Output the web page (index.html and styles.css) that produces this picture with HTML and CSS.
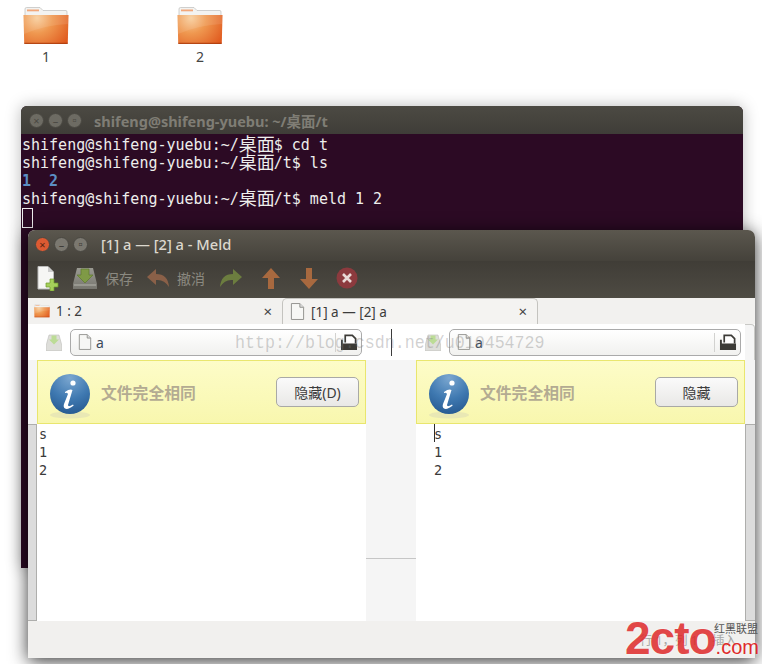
FILE: index.html
```html
<!DOCTYPE html>
<html lang="zh">
<head>
<meta charset="utf-8">
<title>Meld</title>
<link rel="stylesheet" href="styles.css">
</head>
<body>
<svg class="defs" width="0" height="0">
  <defs>
    <radialGradient id="fold" gradientUnits="userSpaceOnUse" cx="14" cy="11" r="44">
      <stop offset="0" stop-color="#f7cd9b"/><stop offset="0.35" stop-color="#ef9850"/><stop offset="1" stop-color="#dc4810"/>
    </radialGradient>
    <linearGradient id="drive" x1="0" y1="0" x2="0" y2="1">
      <stop offset="0" stop-color="#9a9a92"/><stop offset="1" stop-color="#77766f"/>
    </linearGradient>
    <radialGradient id="ball" cx="0.5" cy="0.1" r="0.95">
      <stop offset="0" stop-color="#7ba7d0"/><stop offset="0.55" stop-color="#3f79b1"/><stop offset="1" stop-color="#25588f"/>
    </radialGradient>
    <symbol id="folder" viewBox="0 0 46 38">
      <path d="M2 2 Q2 .5 3.500 .5 H17 L20 3.500 H43 Q44 3.500 44 5 V10 H2 Z" fill="#f3f3f1" stroke="#bdbdbb" stroke-width=".7"/>
      <rect x="4" y="2.500" width="12" height="1.800" fill="#f2a77a"/>
      <path d="M0.500 8 H45.500 L44.800 35.500 Q44.700 37 43 37 H3 Q1.300 37 1.200 35.500 Z" fill="url(#fold)"/>
      <path d="M1 27 Q22 18 45 17 L45 8 H1 Z" fill="#fff" opacity=".1"/>
      <path d="M1.200 36.300 H44.800" stroke="#a93a0c" stroke-width="1"/>
    </symbol>
    <symbol id="doc" viewBox="0 0 16 18">
      <path d="M1.500 .5 H10.500 L14.500 4.500 V17.500 H1.500 Z" fill="#f7f7f5" stroke="#8f8f8c"/>
      <path d="M10.500 .5 V4.500 H14.500" fill="#ddd" stroke="#8f8f8c"/>
    </symbol>
    <symbol id="open" viewBox="0 0 19 18">
      <path d="M5.500 9 V1.500 H13 L16.500 5 V10" fill="#fff" stroke="#3c3b37" stroke-width="1.800"/>
      <path d="M1 6 H3 V10 H18 V17 H1 Z" fill="#3c3b37"/>
    </symbol>
    <symbol id="save" viewBox="0 0 24 24">
      <path d="M4 2 H20 L24 18 V23 H0 V18 Z" fill="url(#drive)"/>
      <path d="M8 3 H16 V9 H20 L12 17 L4 9 H8 Z" fill="#7f9a46" stroke="#5f7a2e" stroke-width=".7"/>
      <rect x="1" y="18.500" width="22" height="1" fill="#b4b4ac"/>
    </symbol>
    <symbol id="save-dim" viewBox="0 0 16 17">
      <path d="M3 1 H13 L16 12 V16.500 H0 V12 Z" fill="#dededa" stroke="#bdbdb8" stroke-width=".6"/>
      <path d="M5.500 1.500 H10.500 V5.500 H13 L8 10.500 L3 5.500 H5.500 Z" fill="#bcdc96"/>
    </symbol>
    <symbol id="info" viewBox="0 0 44 48">
      <ellipse cx="22" cy="42" rx="20" ry="3.500" fill="#e9e8b4"/>
      <circle cx="22" cy="21" r="20" fill="url(#ball)"/>
      <circle cx="25" cy="10" r="2.600" fill="#fff"/>
      <path d="M17 19 Q22 15.500 24.500 17 L20 32 Q20 34.500 25 31.500 L25.700 32.500 Q20 37 17 35.500 Q15 34 16 31 L20 21 Q19 19 17 20 Z" fill="#fff"/>
    </symbol>
  </defs>
</svg>

<div class="icon icon-one">
  <svg class="folder-icon"><use href="#folder"/></svg>
  <span>1</span>
</div>
<div class="icon icon-two">
  <svg class="folder-icon"><use href="#folder"/></svg>
  <span>2</span>
</div>

<section class="terminal">
  <header class="term-bar">
    <div class="lights">
      <span class="light dim">×</span><span class="light dim">–</span><span class="light dim">▫</span>
    </div>
    <span class="term-title">shifeng@shifeng-yuebu: ~/桌面/t</span>
  </header>
  <div class="term-body">
    <div class="term-line">shifeng@shifeng-yuebu:~/<i>桌面</i>$ cd t</div>
    <div class="term-line">shifeng@shifeng-yuebu:~/<i>桌面</i>/t$ ls</div>
    <div class="term-line"><b>1</b>  <b>2</b></div>
    <div class="term-line">shifeng@shifeng-yuebu:~/<i>桌面</i>/t$ meld 1 2</div>
    <div class="term-line"><u class="term-cursor"></u></div>
  </div>
</section>

<section class="meld">
  <header class="meld-head">
    <div class="meld-bar">
      <div class="lights lights-meld">
        <span class="light close">×</span><span class="light">–</span><span class="light">▫</span>
      </div>
      <span class="meld-title">[1] a — [2] a - Meld</span>
    </div>
    <div class="toolbar">
      <svg class="t-new" width="22" height="25" viewBox="0 0 22 25">
        <path d="M1 .5 H11 L16.500 6 V23 H1 Z" fill="#f6f6f4" stroke="#bbb"/>
        <path d="M11 .5 V6 H16.500" fill="#ccc"/>
        <path d="M13 13 H17 V17 H21 V21 H17 V25 H13 V21 H9 V17 H13 Z" fill="#a5cf5a" stroke="#6f9a2c" stroke-width=".7"/>
      </svg>
      <svg class="t-save" width="24" height="24"><use href="#save"/></svg>
      <span class="t-label t-label-save">保存</span>
      <svg class="t-undo" width="22" height="18" viewBox="0 0 22 18">
        <path d="M9 0 V5 Q21 5 22 18 Q17 10 9 11 V16 L0 8 Z" fill="#8a6048"/>
      </svg>
      <span class="t-label t-label-undo">撤消</span>
      <svg class="t-redo" width="22" height="18" viewBox="0 0 22 18">
        <path d="M13 0 V5 Q1 5 0 18 Q5 10 13 11 V16 L22 8 Z" fill="#6c7d3f"/>
      </svg>
      <svg class="t-up" width="18" height="21" viewBox="0 0 18 21">
        <path d="M9 0 L18 10 H12 V21 H6 V10 H0 Z" fill="#a8693f"/>
      </svg>
      <svg class="t-down" width="18" height="21" viewBox="0 0 18 21">
        <path d="M9 21 L18 11 H12 V0 H6 V11 H0 Z" fill="#a8693f"/>
      </svg>
      <svg class="t-stop" width="22" height="22" viewBox="0 0 22 22">
        <circle cx="11" cy="11" r="10.500" fill="#8c3a3e"/>
        <path d="M7 7 L15 15 M15 7 L7 15" stroke="#e9d9d6" stroke-width="2.600"/>
      </svg>
    </div>
  </header>

  <nav class="tabs">
    <div class="tab tab-off">
      <svg class="tab-folder"><use href="#folder"/></svg>
      <span class="tab-text">1 : 2</span>
      <span class="tab-x">×</span>
    </div>
    <div class="tab tab-on">
      <svg class="tab-doc"><use href="#doc"/></svg>
      <span class="tab-text">[1] a — [2] a</span>
      <span class="tab-x">×</span>
    </div>
  </nav>

  <div class="locations">
    <div class="loc loc-left">
      <svg class="loc-save"><use href="#save-dim"/></svg>
      <div class="entry">
        <svg class="entry-doc"><use href="#doc"/></svg>
        <span class="entry-text">a</span>
        <i class="entry-sep"></i>
        <svg class="entry-open"><use href="#open"/></svg>
      </div>
    </div>
    <div class="loc-cursor"></div>
    <div class="loc loc-right">
      <svg class="loc-save"><use href="#save-dim"/></svg>
      <div class="entry">
        <svg class="entry-doc"><use href="#doc"/></svg>
        <span class="entry-text">a</span>
        <i class="entry-sep"></i>
        <svg class="entry-open"><use href="#open"/></svg>
      </div>
    </div>
    <div class="loc-end"></div>
  </div>

  <div class="panes">
    <div class="gutter gutter-left"><div class="thumb"></div></div>
    <div class="pane">
      <div class="notice">
        <svg class="info-icon"><use href="#info"/></svg>
        <span class="notice-text">文件完全相同</span>
        <button class="hide-btn">隐藏(D)</button>
      </div>
      <pre class="code">s
1
2</pre>
    </div>
    <div class="link-map"><div class="link-line"></div></div>
    <div class="pane">
      <div class="notice">
        <svg class="info-icon"><use href="#info"/></svg>
        <span class="notice-text">文件完全相同</span>
        <button class="hide-btn">隐藏</button>
      </div>
      <pre class="code code-right"><u class="caret"></u>s
1
2</pre>
    </div>
    <div class="gutter gutter-right"><div class="thumb"></div></div>
  </div>
  <footer class="status"><span class="status-text">行 1，列 1</span><span class="status-mode">插入</span></footer>
</section>

<div class="watermark">http://blog.csdn.net/u010454729</div>
<div class="logo">
  <span class="logo-main">2cto</span><span class="logo-com">.com</span>
  <span class="logo-cn">红黑联盟</span>
</div>
</body>
</html>
```

FILE: styles.css
```css
* { box-sizing: border-box; }
html, body { margin: 0; height: 100%; }
body {
  position: relative;
  width: 762px;
  height: 664px;
  overflow: hidden;
  background: #fff;
  font-family: "Noto Sans", "Noto Sans CJK SC", sans-serif;
}
.defs { position: absolute; }

/* Desktop */
.icon {
  position: absolute;
  top: 7px;
  width: 92px;
  display: flex;
  flex-direction: column;
  align-items: center;
  font-size: 14px;
  color: #444;
}
.icon-one { left: 0; }
.icon-two { left: 154px; }
.folder-icon { width: 46px; height: 38px; }
.icon span { margin-top: 3px; line-height: 18px; }

/* Terminal */
.terminal {
  position: absolute;
  left: 21px;
  top: 106px;
  width: 722px;
  height: 462px;
  border-radius: 6px 6px 0 0;
  background: #2c0a24;
  box-shadow: 0 0 16px rgba(0, 0, 0, .28);
  overflow: hidden;
}
.term-bar {
  height: 28px;
  display: flex;
  align-items: center;
  padding-left: 8px;
  background: linear-gradient(#4c4a43, #3f3d38);
}
.lights { display: flex; gap: 4px; width: 65px; }
.light {
  width: 15px;
  height: 15px;
  border-radius: 50%;
  background: #7b7870;
  border: 1px solid #4a4842;
  display: flex;
  align-items: center;
  justify-content: center;
  font-size: 11px;
  line-height: 1;
  color: #3c3a35;
}
.light.dim { background: #6d6b63; color: #4a4842; }
.light.close { background: #dc5a32; color: #5a2410; }
.term-title {
  font-size: 14.500px;
  font-weight: 700;
  color: #7f7d75;
}
.term-body {
  padding: 2px 0 0 1px;
  font: 15px/18px "DejaVu Sans Mono", "Noto Sans CJK SC", monospace;
  color: #eeeeec;
}
.term-line { height: 18px; white-space: pre; }
.term-body i {
  font-style: normal;
  font-family: "Noto Sans CJK SC", sans-serif;
  font-size: 18px;
  display: inline-block;
  width: 35px;
  height: 18px;
  line-height: 15px;
  vertical-align: top;
}
.term-body b { color: #5c8fc4; font-weight: 700; }
.term-cursor {
  display: block;
  width: 11px;
  height: 20px;
  border: 1px solid #eee;
}

/* Meld window */
.meld {
  position: absolute;
  left: 28px;
  top: 230px;
  width: 727px;
  height: 428px;
  display: flex;
  flex-direction: column;
  border-radius: 7px 7px 0 0;
  background: #f2f1ef;
  box-shadow: 0 3px 18px rgba(0, 0, 0, .8);
  overflow: hidden;
}
.meld-head { height: 68px; background: linear-gradient(#5b574e 0, #45423b 45%, #403d37 46%, #4e4b43 100%); }
.meld-bar {
  height: 28px;
  display: flex;
  align-items: center;
  padding-left: 7px;
}
.lights-meld { width: 66px; }
.meld-title { font-size: 14.700px; font-weight: 500; color: #dcd8ce; }
.toolbar { height: 40px; display: flex; align-items: center; padding-left: 9px; }
.toolbar svg { flex: none; }
.t-save { margin-left: 14px; }
.t-label { font-size: 14px; color: #8b8980; }
.t-label-save { margin-left: 8px; }
.t-undo { margin-left: 14px; }
.t-label-undo { margin-left: 8px; }
.t-redo { margin-left: 15px; }
.t-up { margin-left: 20px; }
.t-down { margin-left: 20px; }
.t-stop { margin-left: 18px; }

.tabs { height: 26px; display: flex; background: #f2f1ef; }
.tab { display: flex; align-items: center; font-size: 13.500px; color: #3c3c3c; }
.tab-off { width: 254px; padding: 0 10px 0 6px; }
.tab-on {
  width: 256px;
  padding: 0 10px 0 7px;
  background: #f4f3f1;
  border: 1px solid #c4c3bf;
  border-bottom: 0;
  border-radius: 5px 5px 0 0;
}
.tab-folder { width: 16px; height: 14px; flex: none; }
.tab-doc { width: 15px; height: 17px; flex: none; }
.tab-text { margin-left: 6px; flex: 1; }
.tab-on .tab-text { margin-left: 6px; }
.tab-x { font-size: 15px; color: #444; line-height: 1; }

.locations {
  height: 36px;
  display: flex;
  align-items: center;
  background: #fff;
}
.loc { display: flex; align-items: center; }
.loc-left { margin-left: 18px; }
.loc-right { margin-left: 33px; }
.loc-save { width: 16px; height: 17px; flex: none; }
.loc-left .entry { margin-left: 8px; }
.loc-right .entry { margin-left: 8px; }
.loc-cursor { width: 1px; height: 27px; margin-left: 29px; background: #3c3c3c; }
.loc-end {
  width: 10px;
  height: 36px;
  margin-left: auto;
  background: #f5f5f5;
  border-top: 1px solid #c9c9c6;
  border-right: 1px solid #c9c9c6;
  border-radius: 0 4px 0 0;
}
.entry {
  width: 292px;
  height: 27px;
  display: flex;
  align-items: center;
  padding: 0 3px 0 7px;
  border: 1px solid #aaa;
  border-radius: 5px;
  background: linear-gradient(#fff, #f1f1ef);
}
.entry-doc { width: 14px; height: 16px; flex: none; }
.entry-text { margin-left: 4px; flex: 1; font-size: 14px; color: #3c4a5a; }
.entry-sep { width: 1px; height: 19px; background: #d2d2d0; margin-right: 4px; }
.entry-open { width: 18px; height: 17px; flex: none; }

.panes { height: 261px; display: flex; background: #f5f5f5; }
.gutter { display: flex; flex-direction: column; justify-content: flex-end; flex: none; }
.gutter-left { width: 9px; }
.gutter-right { width: 10px; }
.thumb { height: 197px; background: #dcdcdc; border: 1px solid #aeaeac; }
.gutter-left .thumb { border-left: 0; }
.gutter-right .thumb { border-right: 0; }
.pane { width: 329px; display: flex; flex-direction: column; background: #fff; flex: none; }
.link-map { width: 50px; flex: none; padding-top: 198px; }
.link-line { height: 1px; background: #c6c6c6; }
.notice {
  height: 64px;
  display: flex;
  align-items: center;
  padding: 0 6px 0 10px;
  background: linear-gradient(#fdfcc8, #f8f7ae);
  border: 1px solid #e9e66e;
}
.info-icon { width: 44px; height: 48px; flex: none; margin-top: 9px; }
.notice-text {
  margin-left: 9px;
  flex: 1;
  font-size: 15.800px;
  font-weight: 700;
  color: #b3ab92;
  font-family: "Noto Sans CJK SC", sans-serif;
}
.hide-btn {
  width: 83px;
  height: 30px;
  padding: 0;
  border: 1px solid #a9a9a6;
  border-radius: 5px;
  background: linear-gradient(#fafafa, #e9e8e6);
  font: 14px "Noto Sans", "Noto Sans CJK SC", sans-serif;
  color: #3c3c3c;
}
.code {
  margin: 0;
  padding: 1px 0 0 2px;
  font: 13.500px/18px "DejaVu Sans Mono", monospace;
  color: #3a3a3a;
  position: relative;
}
.code-right { padding-left: 18px; }
.caret {
  position: absolute;
  left: 18px;
  top: 0;
  width: 1px;
  height: 18px;
  background: #2c2c2c;
}
.status {
  height: 36px;
  display: flex;
  align-items: center;
  justify-content: flex-end;
  gap: 14px;
  padding: 0 18px 0 0;
  background: #f1f0ee;
  font-size: 12.500px;
  color: #a5a5a3;
}

/* Overlays */
.watermark {
  position: absolute;
  left: 235px;
  top: 332px;
  font: 16.650px/22px "Liberation Mono", monospace;
  color: rgba(120, 120, 120, .34);
  white-space: nowrap;
  transform: scaleY(1.15);
}
.logo {
  position: absolute;
  left: 625px;
  top: 613px;
  width: 137px;
  height: 50px;
  color: #df2a2a;
  font-family: "Liberation Sans", sans-serif;
  white-space: nowrap;
  text-shadow: 0 0 3px rgba(255, 255, 255, .9);
}
.logo-main { font-size: 46px; line-height: 50px; letter-spacing: -1px; font-weight: 700; opacity: .85; }
.logo-com { font-size: 20px; line-height: 20px; }
.logo-cn {
  position: absolute;
  right: 4px;
  top: 8px;
  font: 11px/14px "Noto Sans CJK SC", sans-serif;
  color: #555;
  text-shadow: none;
}
```
